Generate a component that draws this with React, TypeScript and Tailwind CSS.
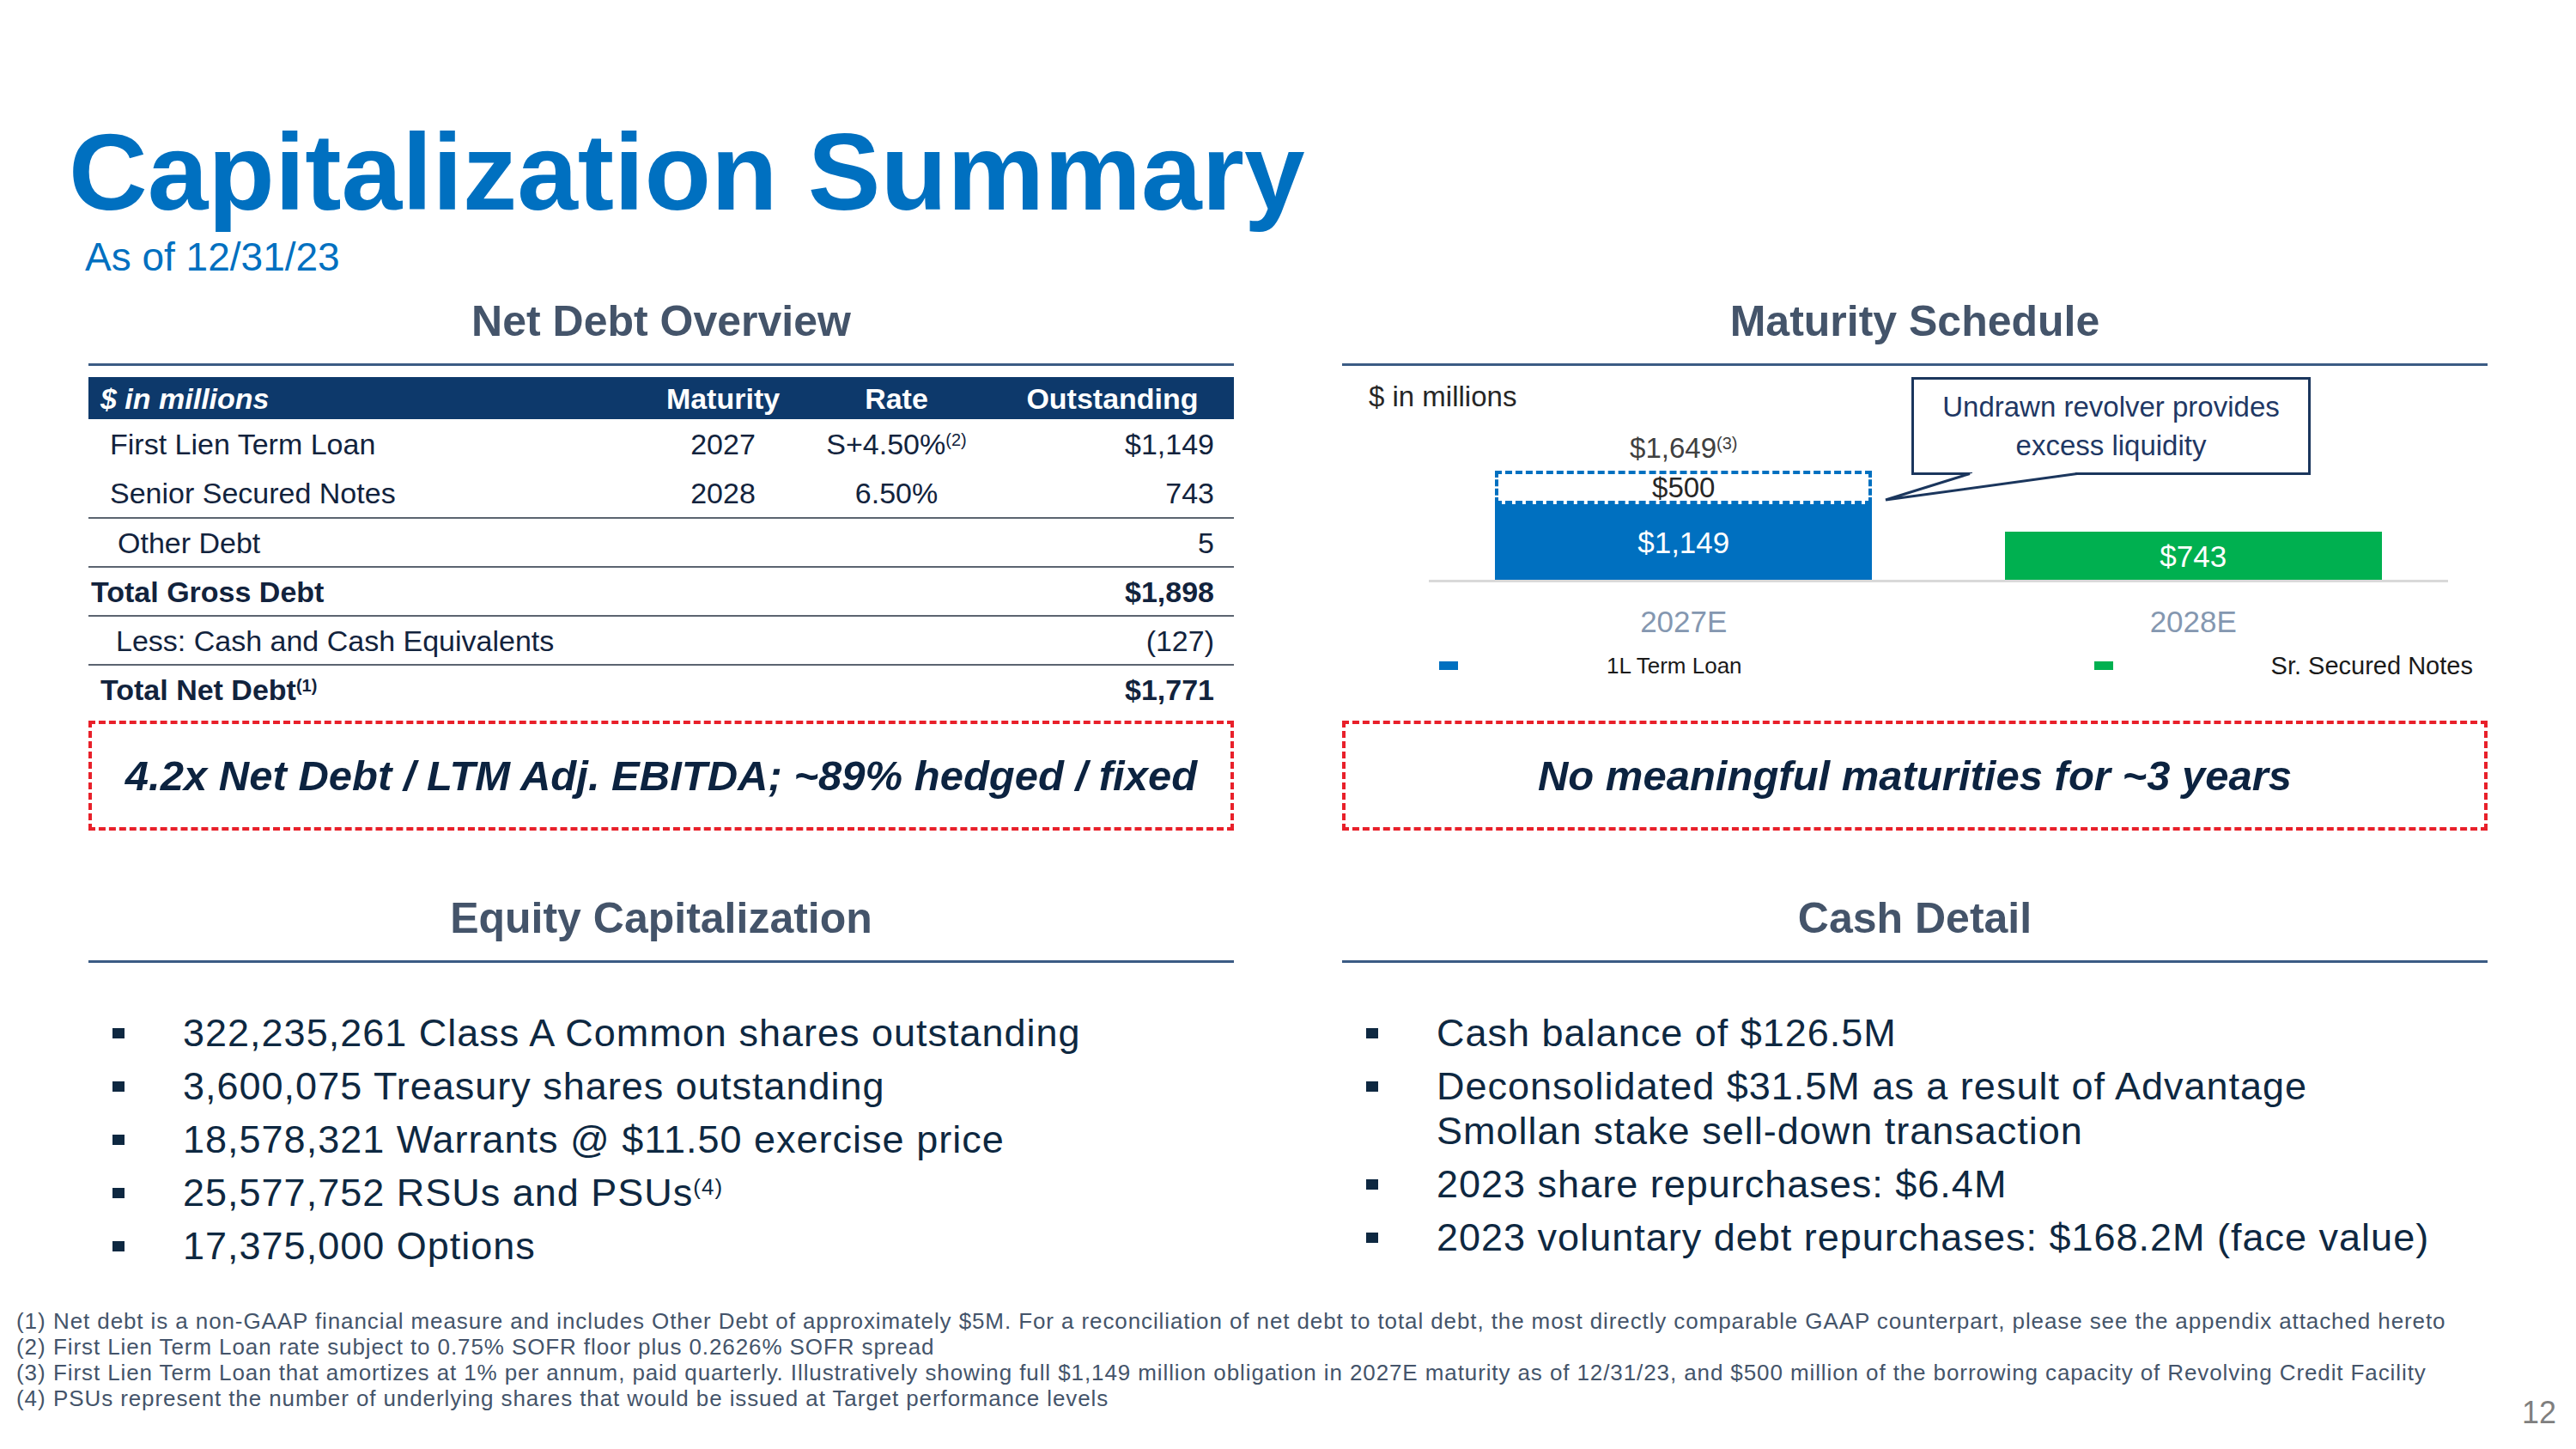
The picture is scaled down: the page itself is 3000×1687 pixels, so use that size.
import type { ReactNode } from "react";

interface DebtRow {
  label: ReactNode;
  maturity?: string;
  rate?: ReactNode;
  value: string;
  indent: string;
  bold?: boolean;
  divider?: boolean;
}

const debtRows: DebtRow[] = [
  { label: "First Lien Term Loan", maturity: "2027", rate: <>S+4.50%<sup className="text-[20px]">(2)</sup></>, value: "$1,149", indent: "pl-[25px]" },
  { label: "Senior Secured Notes", maturity: "2028", rate: "6.50%", value: "743", indent: "pl-[25px]" },
  { label: "Other Debt", value: "5", indent: "pl-[34px]", divider: true },
  { label: "Total Gross Debt", value: "$1,898", indent: "pl-[3px]", bold: true, divider: true },
  { label: "Less: Cash and Cash Equivalents", value: "(127)", indent: "pl-[32px]", divider: true },
  { label: <>Total Net Debt<sup className="text-[20px]">(1)</sup></>, value: "$1,771", indent: "pl-[14px]", bold: true, divider: true },
];

const equityItems: ReactNode[] = [
  "322,235,261 Class A Common shares outstanding",
  "3,600,075 Treasury shares outstanding",
  "18,578,321 Warrants @ $11.50 exercise price",
  <>25,577,752 RSUs and PSUs<sup className="text-[26px]">(4)</sup></>,
  "17,375,000 Options",
];

const cashItems: ReactNode[] = [
  "Cash balance of $126.5M",
  <>Deconsolidated $31.5M as a result of Advantage<br />Smollan stake sell-down transaction</>,
  "2023 share repurchases: $6.4M",
  "2023 voluntary debt repurchases: $168.2M (face value)",
];

const footnotes = [
  "Net debt is a non-GAAP financial measure and includes Other Debt of approximately $5M. For a reconciliation of net debt to total debt, the most directly comparable GAAP counterpart, please see the appendix attached hereto",
  "First Lien Term Loan rate subject to 0.75% SOFR floor plus 0.2626% SOFR spread",
  "First Lien Term Loan that amortizes at 1% per annum, paid quarterly. Illustratively showing full $1,149 million obligation in 2027E maturity as of 12/31/23, and $500 million of the borrowing capacity of Revolving Credit Facility",
  "PSUs represent the number of underlying shares that would be issued at Target performance levels",
];

function SectionHeader({ title }: { title: string }) {
  return (
    <div className="border-b-[3px] border-[#3b5b84] pb-[24px] text-center text-[50px] font-bold leading-none text-[#44546a]">
      {title}
    </div>
  );
}

function Callout({ children }: { children: ReactNode }) {
  return (
    <div className="mt-[9px] flex h-[128px] items-center justify-center border-4 border-dashed border-[#e8202a] text-[49px] font-bold italic leading-none text-[#0c2340]">
      {children}
    </div>
  );
}

function DebtTable() {
  return (
    <div className="h-[404px]">
      <div className="mt-[13px] flex h-[49px] items-center bg-[#0d396b] text-[34px] font-bold leading-none text-white">
        <div className="flex-1 pl-[14px] italic">$ in millions</div>
        <div className="w-[204px] text-center">Maturity</div>
        <div className="w-[200px] text-center">Rate</div>
        <div className="w-[293px] pl-[10px] text-center">Outstanding</div>
      </div>
      {debtRows.map((row, i) => (
        <div
          key={i}
          className={`flex h-[57px] items-center text-[34px] leading-none text-[#12233d] ${row.divider ? "border-t-2 border-[#5b6470]" : ""} ${row.bold ? "font-bold" : ""}`}
        >
          <div className={`flex-1 ${row.indent}`}>{row.label}</div>
          <div className="w-[204px] text-center">{row.maturity}</div>
          <div className="w-[200px] text-center">{row.rate}</div>
          <div className="w-[293px] pr-[23px] text-right">{row.value}</div>
        </div>
      ))}
    </div>
  );
}

function MaturityChart() {
  return (
    <div className="relative h-[404px]">
      <div className="pl-[31px] pt-[19px] text-[33px] leading-none text-[#262626]">$ in millions</div>

      <div className="ml-[101px] flex h-[197px] w-[1187px]">
        <div className="flex flex-1 flex-col items-center justify-end">
          <div className="text-[33px] leading-none text-[#404040]">
            $1,649<sup className="text-[20px]">(3)</sup>
          </div>
          <div className="mt-[10px] flex h-[39px] w-[439px] items-center justify-center border-4 border-dashed border-[#0070c0] text-[33px] leading-none text-[#262626]">
            $500
          </div>
          <div className="flex h-[88px] w-[439px] items-center justify-center bg-[#0070c0] text-[35px] leading-none text-white">
            $1,149
          </div>
        </div>
        <div className="flex flex-1 flex-col items-center justify-end">
          <div className="flex h-[56px] w-[439px] items-center justify-center bg-[#00b050] text-[35px] leading-none text-white">
            $743
          </div>
        </div>
      </div>
      <div className="ml-[101px] h-[3px] w-[1187px] bg-[#d9d9d9]" />

      <div className="ml-[101px] mt-[28px] flex w-[1187px] text-[35px] leading-none text-[#8497b0]">
        <div className="flex-1 text-center">2027E</div>
        <div className="flex-1 text-center">2028E</div>
      </div>

      <div className="mt-[21px] flex h-[26px] items-center pl-[113px] leading-none text-[#1a1a1a]">
        <div className="h-[10px] w-[22px] bg-[#0070c0]" />
        <div className="ml-[173px] text-[26px]">1L Term Loan</div>
        <div className="ml-[410px] h-[10px] w-[22px] bg-[#00b050]" />
        <div className="ml-[184px] text-[29px]">Sr. Secured Notes</div>
      </div>

      {/* revolver callout */}
      <div className="absolute left-[663px] top-[13px] flex h-[114px] w-[465px] flex-col items-center justify-center border-[3px] border-[#1b365d] bg-white text-[33px] leading-[45px] text-[#1f3864]">
        <div>Undrawn revolver provides</div>
        <div>excess liquidity</div>
      </div>
      <svg className="absolute left-[617px] top-[115px]" width="260" height="50" viewBox="0 0 260 50">
        <rect x="117" y="7" width="120" height="7" fill="white" />
        <polygon points="116,10 16,41 237,10" fill="white" />
        <polyline points="114,10.5 16,41 239,10.5" fill="none" stroke="#1b365d" strokeWidth="3" />
      </svg>
    </div>
  );
}

function Bullets({ items }: { items: ReactNode[] }) {
  return (
    <div className="mt-[56px] flex flex-col gap-[10px] text-[45px] leading-[52px] tracking-[1px] text-[#0e2841]">
      {items.map((item, i) => (
        <div key={i} className="flex">
          <div className="flex h-[52px] w-[110px] shrink-0 items-center pl-[28px]">
            <div className="h-[12px] w-[14px] bg-[#0e2841]" />
          </div>
          <div>{item}</div>
        </div>
      ))}
    </div>
  );
}

export default function App() {
  return (
    <div className="relative h-[1687px] w-[3000px] overflow-hidden bg-white font-['Liberation_Sans',Arial,sans-serif]">
      <div className="pl-[80px] pt-[137px] text-[127px] font-bold leading-none text-[#0070c0]">Capitalization Summary</div>
      <div className="mt-[12px] pl-[99px] text-[46px] leading-none text-[#0070c0]">As of 12/31/23</div>

      <div className="mt-[27px] flex gap-[126px] pl-[103px]">
        <div className="flex w-[1334px] flex-col">
          <SectionHeader title="Net Debt Overview" />
          <DebtTable />
          <Callout>4.2x Net Debt / LTM Adj. EBITDA; ~89% hedged / fixed</Callout>
          <div className="mt-[77px]">
            <SectionHeader title="Equity Capitalization" />
          </div>
          <Bullets items={equityItems} />
        </div>

        <div className="flex w-[1334px] flex-col">
          <SectionHeader title="Maturity Schedule" />
          <MaturityChart />
          <Callout>No meaningful maturities for ~3 years</Callout>
          <div className="mt-[77px]">
            <SectionHeader title="Cash Detail" />
          </div>
          <Bullets items={cashItems} />
        </div>
      </div>

      <div className="mt-[46px] flex items-start justify-between pl-[19px] pr-[23px]">
        <div className="text-[26px] leading-[30px] tracking-[0.9px] text-[#44546a]">
          {footnotes.map((note, i) => (
            <div key={i} className="flex whitespace-nowrap">
              <span className="w-[43px] shrink-0">({i + 1})</span>
              <span>{note}</span>
            </div>
          ))}
        </div>
        <div className="mt-[104px] text-[36px] leading-none text-[#7f7f7f]">12</div>
      </div>
    </div>
  );
}
